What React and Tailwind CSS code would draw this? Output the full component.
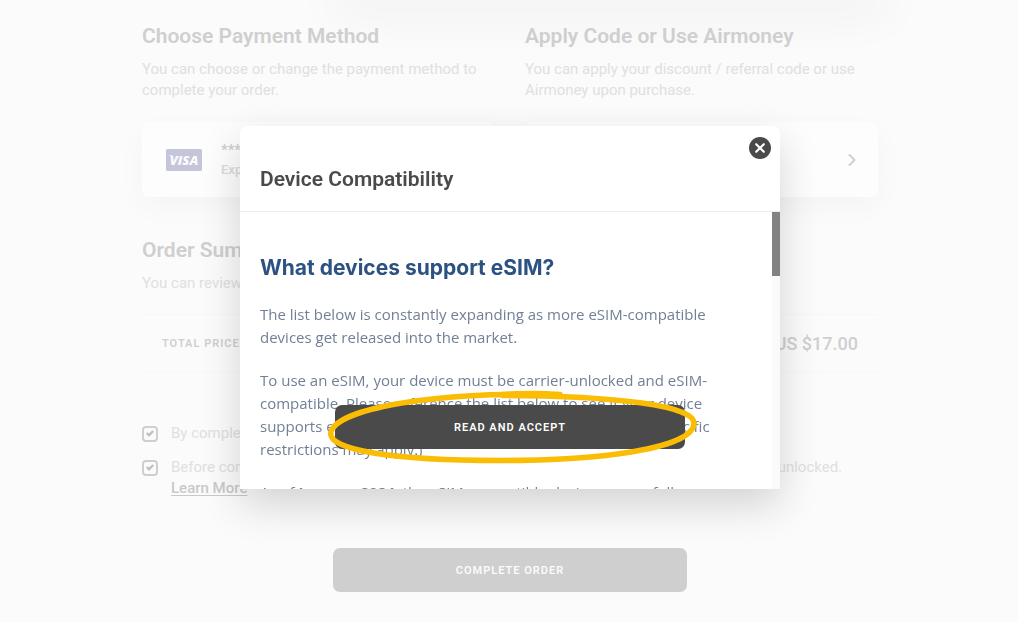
import React from "react";
import { ChevronRight } from "lucide-react";

function Heading({ children }) {
  return <h2 className="text-[21px] leading-6 font-semibold text-[#cfcfcf]">{children}</h2>;
}

function Lead({ children }) {
  return <p className="mt-[11px] text-[15px] leading-[21px] text-[#e0e0e0]">{children}</p>;
}

function VisaBadge() {
  return (
    <svg viewBox="0 0 36 22" className="h-[22px] w-9 shrink-0" role="img" aria-label="Visa">
      <rect width="36" height="22" rx="1.5" fill="#c4c5da" />
      <text
        x="18"
        y="15.500"
        textAnchor="middle"
        fill="#fbfbfb"
        className="font-['Open_Sans',sans-serif] text-[13px] font-extrabold italic"
      >
        VISA
      </text>
      <path d="M2.800 6.200h3.400l1.200 3.200Q5.800 7 2.800 6.200Z" fill="#fbfbfb" />
    </svg>
  );
}

function Consent({ id, children }) {
  return (
    <div className="flex items-start gap-[13px]">
      <span className="relative mt-[3px] size-4 shrink-0">
        <input
          id={id}
          type="checkbox"
          defaultChecked
          className="block size-4 appearance-none rounded-[4px] border-2 border-[#cfcfcf] bg-transparent"
        />
        <svg viewBox="0 0 16 16" className="pointer-events-none absolute inset-0 size-4" aria-hidden="true">
          <path d="m4.800 7 2.200 2.200 4.200-4.200" fill="none" stroke="#c0c0c0" strokeWidth="2.400" />
        </svg>
      </span>
      <label htmlFor={id} className="text-[15px] leading-[21px] text-[#e0e0e0]">
        {children}
      </label>
    </div>
  );
}

function Checkout() {
  return (
    <main className="mx-auto w-full max-w-[736px]">
      <div className="ml-[202px] h-0 shadow-[0_0_50px_12px_rgba(0,0,0,0.06)]" />
      <div className="grid grid-cols-2 gap-x-[30px] pt-6">
        <section>
          <Heading>Choose Payment Method</Heading>
          <Lead>You can choose or change the payment method to complete your order.</Lead>
          <button
            type="button"
            className="mt-[21px] flex h-[75px] w-full items-center gap-[19px] rounded-[7px] bg-[#fdfdfd] px-6 text-left shadow-[0_10px_30px_rgba(0,0,0,0.03)]"
          >
            <VisaBadge />
            <span className="flex flex-col">
              <span className="text-[15px] leading-[21px] font-medium text-[#cfcfcf]">**** **** **** 4242</span>
              <span className="text-[13px] leading-[18px] font-medium text-[#dadada]">Expires on 12/26</span>
            </span>
          </button>
        </section>
        <section>
          <Heading>Apply Code or Use Airmoney</Heading>
          <Lead>You can apply your discount / referral code or use Airmoney upon purchase.</Lead>
          <button
            type="button"
            aria-label="Apply code"
            className="mt-[21px] flex h-[75px] w-full items-center justify-end rounded-[7px] bg-[#fdfdfd] px-4 shadow-[0_10px_30px_rgba(0,0,0,0.03)]"
          >
            <ChevronRight className="size-5 text-[#cfcfcf]" strokeWidth={2.4} />
          </button>
        </section>
      </div>

      <section className="mt-[41px]">
        <Heading>Order Summary</Heading>
        <Lead>You can review your order summary below.</Lead>
        <div className="mt-5 flex h-[58px] items-center justify-between border-y border-[#f7f7f7] px-5">
          <span className="pt-0.5 text-[11px] font-semibold tracking-[1px] text-[#cfcfcf]">TOTAL PRICE</span>
          <span className="text-[18px] font-medium text-[#cfcfcf]">US $17.00</span>
        </div>
      </section>

      <section className="mt-[51px] flex flex-col gap-[13px]">
        <Consent id="terms">By completing the order, you agree to our terms and conditions.</Consent>
        <Consent id="device">
          Before completing the order, please confirm your device is eSIM compatible and is network-unlocked.{" "}
          <a href="#devices" className="block w-fit font-medium text-[#c9c9c9] underline underline-offset-2">
            Learn More
          </a>
        </Consent>
      </section>

      <button
        type="button"
        className="mx-auto mt-[49px] block h-11 w-[354px] rounded-[7px] bg-[#cfcfcf] pt-0.5 text-[11px] font-semibold tracking-[1px] text-[#fbfbfb]"
      >
        COMPLETE ORDER
      </button>
    </main>
  );
}

function Highlight() {
  return (
    <svg
      viewBox="0 0 370 76"
      className="pointer-events-none absolute -top-4 -left-2 h-[76px] w-[370px]"
      fill="none"
      stroke="#fbbc04"
      strokeLinecap="round"
      aria-hidden="true"
    >
      <path
        d="M233 6.500C150 1 12 14 4 43C-1 61 66 71.500 173 71.500C272 71.500 367 60 367 34C367 17 292 7 176 6.500"
        strokeWidth="5.500"
      />
      <path d="M176 5.500Q205 3.500 233 5.500" strokeWidth="5.500" />
    </svg>
  );
}

function CompatibilityDialog() {
  return (
    <div
      role="dialog"
      aria-modal="true"
      aria-labelledby="dialog-title"
      className="relative flex w-full max-w-[540px] flex-col rounded-t-[7px] bg-white shadow-[0_16px_40px_rgba(0,0,0,0.16)]"
    >
      <header className="flex items-start justify-between border-b border-[#ececec] pt-[11px] pr-[9px] pb-5 pl-5">
        <h2 id="dialog-title" className="mt-[30px] text-[21px] leading-6 font-semibold text-[#4a4a4a]">
          Device Compatibility
        </h2>
        <button type="button" aria-label="Close" className="size-[22px] rounded-full bg-[#4a4a4a]">
          <svg viewBox="0 0 22 22" className="size-[22px]" aria-hidden="true">
            <path d="m7.200 7.200 7.600 7.600m0-7.600-7.600 7.600" stroke="#fff" strokeWidth="2.200" strokeLinecap="round" />
          </svg>
        </button>
      </header>

      <div className="flex h-[277px] overflow-hidden">
        <article className="min-w-0 flex-1 pt-10 pr-14 pl-5 font-['Open_Sans',sans-serif] text-[15px] leading-[23px] text-[#718096]">
          <h3 className="mb-5 font-['Inter',sans-serif] text-[21px] leading-[31px] font-bold text-[#2c5282]">
            What devices support eSIM?
          </h3>
          <p className="mb-5">
            The list below is constantly expanding as more eSIM-compatible
            <br />
            devices get released into the market.
          </p>
          <p className="mb-5 whitespace-nowrap">
            To use an eSIM, your device must be carrier-unlocked and eSIM-
            <br />
            compatible. Please reference the list below to see if your device
            <br />
            supports eSIM. (Please note that any country and carrier-specific
            <br />
            restrictions may apply.)
          </p>
          <p className="whitespace-nowrap">
            As of <strong>January 2024</strong>, the eSIM-compatible devices are as follows:
          </p>
        </article>
        <div className="w-2 shrink-0 bg-[#fafafa]">
          <div className="h-16 bg-[#828282]" />
        </div>
      </div>

      <div className="absolute inset-x-0 bottom-10 flex justify-center">
        <div className="relative">
          <button
            type="button"
            className="block h-11 w-[350px] rounded-[7px] bg-[#4a4a4a] pt-0.5 text-[11px] font-semibold tracking-[1px] text-white"
          >
            READ AND ACCEPT
          </button>
          <Highlight />
        </div>
      </div>
    </div>
  );
}

export default function App() {
  return (
    <div className="min-h-screen overflow-hidden bg-[#fbfbfb] pl-0.5 font-['Roboto',sans-serif]">
      <Checkout />
      <div className="fixed inset-0 flex items-center justify-center pb-[7px] pl-0.5">
        <CompatibilityDialog />
      </div>
    </div>
  );
}
